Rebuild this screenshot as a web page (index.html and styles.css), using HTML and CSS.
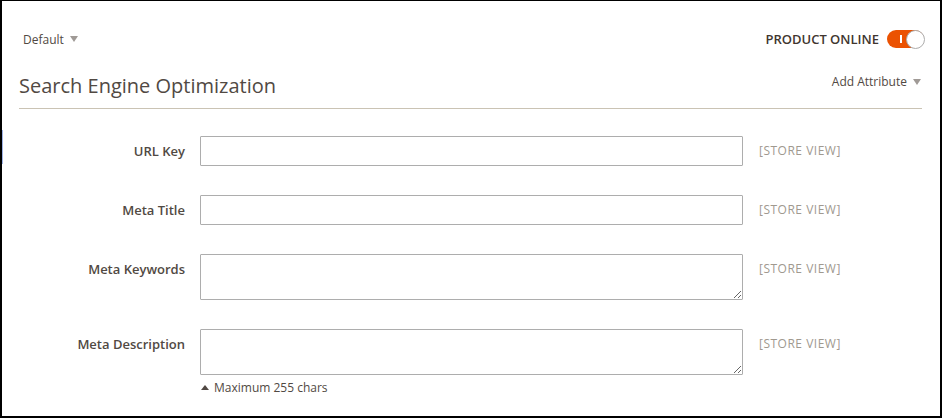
FILE: index.html
```html
<!DOCTYPE html>
<html lang="en">
<head>
<meta charset="utf-8">
<title>Search Engine Optimization</title>
<link rel="stylesheet" href="styles.css">
</head>
<body>
<div class="frame">
  <div class="topbar">
    <div class="scope">Default <span class="tri-down"></span></div>
    <div class="online">
      <span class="online-label">PRODUCT ONLINE</span>
      <span class="toggle"><span class="toggle-bar"></span><span class="toggle-knob"></span></span>
    </div>
  </div>
  <div class="section-head">
    <h2 class="title">Search Engine Optimization</h2>
    <div class="add-attr">Add Attribute <span class="tri-down"></span></div>
  </div>
  <div class="fields">
    <span class="focus-mark"></span>
    <div class="field">
      <label class="label">URL Key</label>
      <div class="control"><input class="input" type="text"></div>
      <div class="scope-label">[STORE VIEW]</div>
    </div>
    <div class="field">
      <label class="label">Meta Title</label>
      <div class="control"><input class="input" type="text"></div>
      <div class="scope-label">[STORE VIEW]</div>
    </div>
    <div class="field">
      <label class="label">Meta Keywords</label>
      <div class="control"><textarea class="textarea"></textarea></div>
      <div class="scope-label">[STORE VIEW]</div>
    </div>
    <div class="field">
      <label class="label">Meta Description</label>
      <div class="control">
        <textarea class="textarea"></textarea>
        <div class="note"><span class="tri-up"></span>Maximum 255 chars</div>
      </div>
      <div class="scope-label">[STORE VIEW]</div>
    </div>
  </div>
</div>
</body>
</html>
```
FILE: styles.css
```css
html, body {
  margin: 0;
  padding: 0;
  background: #fff;
}
.frame {
  position: relative;
  box-sizing: border-box;
  width: 942px;
  height: 418px;
  border-top: 1px solid #000;
  border-left: 2px solid #000;
  border-right: 2px solid #000;
  border-bottom: 2px solid #000;
  padding: 0 18px 0 17px;
  font-family: "Open Sans", "Liberation Sans", sans-serif;
  color: #41362f;
  overflow: hidden;
}
.topbar {
  display: flex;
  justify-content: space-between;
  align-items: center;
  padding: 28px 0 0 4px;
  height: 20px;
  margin-right: -2px;
}
.scope {
  font-size: 12px;
  color: #514943;
  display: flex;
  align-items: center;
  gap: 6px;
}
.tri-down {
  display: inline-block;
  width: 0;
  height: 0;
  border-left: 4.5px solid transparent;
  border-right: 4.5px solid transparent;
  border-top: 6px solid #a09a96;
}
.tri-up {
  display: inline-block;
  width: 0;
  height: 0;
  border-left: 4.5px solid transparent;
  border-right: 4.5px solid transparent;
  border-bottom: 5px solid #514943;
  margin-right: 5px;
  vertical-align: 2px;
}
.online {
  display: flex;
  align-items: center;
  gap: 8px;
}
.online-label {
  font-size: 13px;
  font-weight: 600;
  color: #41362f;
}
.toggle {
  position: relative;
  display: flex;
  align-items: center;
  justify-content: flex-end;
  width: 37px;
  height: 18px;
  border-radius: 9px;
  background: #eb5202;
}
.toggle-bar {
  position: absolute;
  left: 13px;
  top: 5px;
  width: 2px;
  height: 8px;
  background: #fff;
}
.toggle-knob {
  box-sizing: border-box;
  width: 19px;
  height: 19px;
  border-radius: 50%;
  background: #fff;
  border: 1px solid #adadad;
  margin-right: -1px;
}
.section-head {
  display: flex;
  justify-content: space-between;
  align-items: flex-start;
  border-bottom: 1px solid #cac3b4;
  height: 60px;
  box-sizing: border-box;
}
.title {
  margin: 24px 0 0;
  font-size: 20px;
  font-weight: 400;
  line-height: 26px;
  color: #514943;
}
.add-attr {
  margin-top: 24px;
  font-size: 12px;
  color: #514943;
  display: flex;
  align-items: center;
  gap: 6px;
  margin-right: 1px;
}
.fields {
  padding-top: 27px;
}
.focus-mark {
  position: absolute;
  left: 0;
  top: 129px;
  width: 1px;
  height: 34px;
  background: #9fb3e6;
}
.field {
  display: flex;
  align-items: flex-start;
  margin-bottom: 29px;
}
.label {
  width: 166px;
  text-align: right;
  font-size: 13px;
  font-weight: 600;
  color: #514943;
  line-height: 18px;
  padding-top: 6px;
  margin-right: 15px;
}
.control {
  width: 543px;
}
.input, .textarea {
  display: block;
  box-sizing: border-box;
  width: 543px;
  margin: 0;
  border: 1px solid #adadad;
  border-radius: 1px;
  background: #fff;
  font-family: inherit;
}
.input {
  height: 30px;
}
.textarea {
  height: 46px;
  resize: vertical;
}
.scope-label {
  margin-left: 16px;
  font-size: 12px;
  color: #a0998f;
  line-height: 18px;
  padding-top: 6px;
  letter-spacing: 0.5px;
}
.note {
  margin-top: 5px;
  font-size: 12px;
  color: #514943;
  line-height: 15px;
  padding-left: 1px;
}
```
